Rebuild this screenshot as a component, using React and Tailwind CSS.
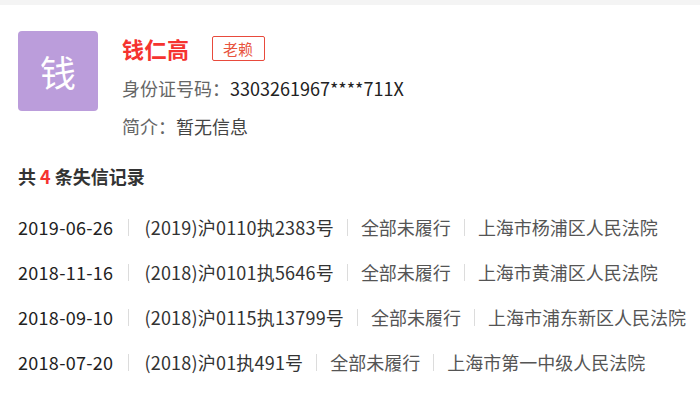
import React from "react";

const rows = [
  ["2019-06-26", "(2019)沪0110执2383号", "全部未履行", "上海市杨浦区人民法院"],
  ["2018-11-16", "(2018)沪0101执5646号", "全部未履行", "上海市黄浦区人民法院"],
  ["2018-09-10", "(2018)沪0115执13799号", "全部未履行", "上海市浦东新区人民法院"],
  ["2018-07-20", "(2018)沪01执491号", "全部未履行", "上海市第一中级人民法院"],
];

function Sep({ wide }) {
  return (
    <span
      className={
        wide
          ? "mx-[15px] block h-[17px] w-[1px] shrink-0 bg-[#dcdcdc]"
          : "mx-[13px] block h-[17px] w-[1px] shrink-0 bg-[#dcdcdc]"
      }
    />
  );
}

export default function App() {
  return (
    <div
      className="w-[700px] h-[398px] overflow-hidden bg-white"
      style={{ fontFamily: '"Noto Sans CJK SC", "Noto Sans", sans-serif' }}
    >
      <div className="h-[5px] bg-[#f4f4f4]" />
      <div className="px-[18px] pt-[26px]">
        <div className="flex">
          <div className="flex h-[80px] w-[80px] shrink-0 items-center justify-center rounded-[4px] bg-[#bb9ddb] text-[36px] text-white">
            钱
          </div>
          <div className="ml-[24px] flex flex-col">
            <div className="flex h-[34px] items-center">
              <span className="text-[22px] font-bold text-[#f5332f] leading-none tracking-[0.5px]">钱仁高</span>
              <span className="ml-[22px] flex h-[25px] w-[53px] items-center justify-center rounded-[2px] border border-[#e84a3c] text-[15px] text-[#e8553f] leading-none">
                老赖
              </span>
            </div>
            <div className="mt-[9px] h-[28px] text-[18px] leading-[28px] text-[#666]">
              身份证号码：<span className="text-[#222]">3303261967****711X</span>
            </div>
            <div className="mt-[10px] h-[28px] text-[18px] leading-[28px] text-[#666]">
              简介：<span className="text-[#444]">暂无信息</span>
            </div>
          </div>
        </div>
        <div className="mt-[22px] h-[28px] text-[18px] font-bold leading-[28px] text-[#333]">
          共 <span className="text-[#f5332f]">4</span> 条失信记录
        </div>
        <div className="mt-[15px] flex flex-col">
          {rows.map((r, i) => (
            <div key={i} className="flex h-[45px] items-center text-[18px] text-[#333] whitespace-nowrap">
              <span className="text-[#222] tracking-[0.3px]">{r[0]}</span>
              <Sep wide />
              <span className="text-[#333] tracking-[0.2px]">{r[1]}</span>
              <Sep />
              <span className="text-[#555]">{r[2]}</span>
              <Sep />
              <span className="text-[#555]">{r[3]}</span>
            </div>
          ))}
        </div>
      </div>
    </div>
  );
}
